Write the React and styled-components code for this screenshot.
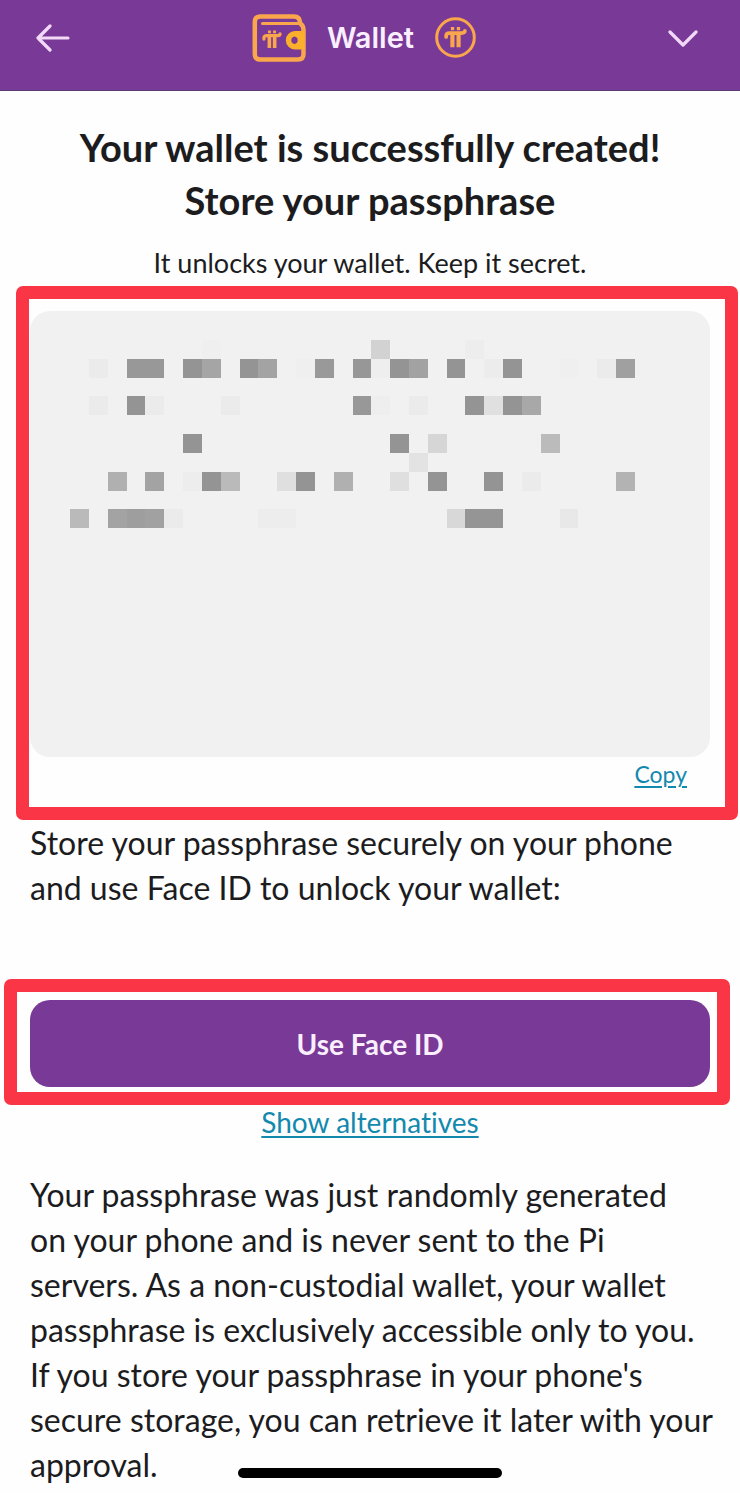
import React from 'react'
import styled, { createGlobalStyle } from 'styled-components'

const GlobalStyle = createGlobalStyle`
  * {
    box-sizing: border-box;
  }
  body {
    margin: 0;
    background: #fefefe;
    color: #1c1c1e;
    font-family: Lato, 'Open Sans', sans-serif;
    font-variant-ligatures: none;
  }
`

const Header = styled.header`
  display: flex;
  justify-content: space-between;
  align-items: center;
  height: 91px;
  padding: 0 42px 15px 36px;
  background: #783a96;
  border-bottom: 1px solid #5c3a70;
`

const IconButton = styled.button`
  display: flex;
  padding: 0;
  border: none;
  background: none;
  color: #f3d9f8;
  cursor: pointer;
`

const Brand = styled.div`
  display: flex;
  align-items: center;
  padding-right: 10px;
  gap: 21px;
  color: #f9a64c;
`

const BrandName = styled.span`
  font-family: Inter, sans-serif;
  font-weight: 600;
  font-size: 29px;
  line-height: 36px;
  color: #fbeeff;
`

const Intro = styled.section`
  padding: 30px 30px 1px;
  text-align: center;
`

const Title = styled.h1`
  margin: 0 0 13px;
  font-weight: 700;
  font-size: 38px;
  line-height: 53px;
`

const Subtitle = styled.p`
  margin: 0;
  font-size: 27px;
  line-height: 45px;
`

const Highlight = styled.div`
  margin: ${props => props.$margin};
  padding: ${props => props.$padding};
  border: 13px solid #fa3545;
  border-radius: 7px;
`

const PhraseBox = styled.div`
  min-height: 446px;
  padding: 29px 75px 29px 40px;
  border-radius: 20px;
  background: #f1f1f1;
  svg {
    display: block;
    width: 100%;
    height: auto;
  }
`

const CopyRow = styled.div`
  display: flex;
  justify-content: flex-end;
  padding: 0 23px 16px 0;
`

const TextLink = styled.a`
  font-size: ${props => props.$size};
  line-height: 34px;
  color: #1489ae;
  text-decoration: underline;
  text-decoration-thickness: 2px;
  text-underline-offset: 3px;
`

const Text = styled.p`
  margin: 0;
  padding: 0 26px 0 30px;
  font-size: 32px;
  line-height: 45px;
`

const PrimaryButton = styled.button`
  display: block;
  width: 100%;
  height: 87px;
  border: none;
  border-radius: 20px;
  background: #783a96;
  color: #fbeeff;
  font-family: inherit;
  font-weight: 700;
  font-size: 28px;
  cursor: pointer;
`

const Alternatives = styled.div`
  margin-bottom: 33px;
  text-align: center;
`

const HomeIndicator = styled.div`
  position: fixed;
  bottom: 15px;
  left: 50%;
  width: 264px;
  height: 10px;
  margin-left: -132px;
  border-radius: 5px;
  background: #000;
`

// [column, row, shade] on a 30 x 10 grid
const MOSAIC = [
  [7, 0, '#efefef'], [16, 0, '#d2d2d2'], [21, 0, '#ededed'],
  [1, 1, '#ebebeb'], [3, 1, '#989898'], [4, 1, '#989898'], [6, 1, '#949494'],
  [7, 1, '#a5a5a5'], [9, 1, '#949494'], [10, 1, '#a3a3a3'], [12, 1, '#efefef'],
  [13, 1, '#999999'], [15, 1, '#979797'], [16, 1, '#eeeeee'], [17, 1, '#949494'],
  [18, 1, '#a2a2a2'], [20, 1, '#949494'], [22, 1, '#ececec'], [23, 1, '#949494'],
  [26, 1, '#efefef'], [28, 1, '#ebebeb'], [29, 1, '#a0a0a0'],
  [1, 3, '#ebebeb'], [3, 3, '#949494'], [4, 3, '#ebebeb'], [8, 3, '#ebebeb'],
  [15, 3, '#989898'], [16, 3, '#eeeeee'], [18, 3, '#ebebeb'], [21, 3, '#949494'],
  [22, 3, '#e0e0e0'], [23, 3, '#949494'], [24, 3, '#a8a8a8'],
  [6, 5, '#949494'], [17, 5, '#949494'], [19, 5, '#d6d6d6'], [25, 5, '#bbbbbb'],
  [18, 6, '#e3e3e3'],
  [2, 7, '#b0b0b0'], [4, 7, '#a3a3a3'], [6, 7, '#ededed'], [7, 7, '#949494'],
  [8, 7, '#bababa'], [11, 7, '#dfdfdf'], [12, 7, '#949494'], [14, 7, '#b0b0b0'],
  [17, 7, '#dfdfdf'], [19, 7, '#949494'], [22, 7, '#949494'], [24, 7, '#ebebeb'],
  [29, 7, '#b3b3b3'],
  [0, 9, '#bababa'], [2, 9, '#a3a3a3'], [3, 9, '#9e9e9e'], [4, 9, '#a1a1a1'],
  [5, 9, '#ebebeb'], [10, 9, '#ededed'], [11, 9, '#ededed'], [20, 9, '#d8d8d8'],
  [21, 9, '#959595'], [22, 9, '#959595'], [26, 9, '#e8e8e8'],
]

const Mosaic = () => (
  <svg viewBox="0 0 30 10" shapeRendering="crispEdges" aria-label="Hidden passphrase">
    {MOSAIC.map(([x, y, fill]) => (
      <rect key={`${x}-${y}`} x={x} y={y} width="1" height="1" fill={fill} />
    ))}
  </svg>
)

const PiMark = ({ transform }) => (
  <g transform={transform} fill="none" stroke="currentColor" strokeWidth="3.4">
    <path d="M1.5 9V8Q1.5 5.5 4.5 5.5H15.5Q18.5 5.5 18.5 3.5" strokeLinecap="round" />
    <path d="M7.2 6V18.5M12.8 6V18.5" strokeWidth="3.8" />
    <path d="M5.8 1.5H8.8M11.2 1.5H14.2" strokeWidth="2.8" />
  </g>
)

const WalletIcon = () => (
  <svg width="54" height="48" viewBox="0 0 54 48" fill="none">
    <path
      d="M51.5 40V16Q51.5 11.5 48.2 9.5Q48 2.5 42 2.5H8.5Q2.8 2.5 2.8 8V40Q2.8 45.5 8.5 45.5H46Q51.5 45.5 51.5 40Z"
      stroke="currentColor"
      strokeWidth="4.5"
      strokeLinejoin="round"
    />
    <path d="M10.5 9.6H47" stroke="currentColor" strokeWidth="3" strokeLinecap="round" />
    <path
      fillRule="evenodd"
      fill="#fbb02c"
      d="M52 17H43A9.2 9.2 0 0 0 43 35.4H52ZM42.5 22.5A3.8 3.8 0 0 1 42.5 30A3.8 3.8 0 0 1 42.5 22.5Z"
    />
    <PiMark transform="translate(10.5 16.5) scale(0.95)" />
  </svg>
)

const CoinIcon = () => (
  <svg width="41" height="41" viewBox="0 0 41 41" fill="none">
    <circle cx="20.5" cy="20.5" r="18.8" stroke="currentColor" strokeWidth="3" />
    <PiMark transform="translate(9.5 10) scale(1.1)" />
  </svg>
)

const Line = ({ width, height, d }) => (
  <svg width={width} height={height} viewBox={`0 0 ${width} ${height}`} fill="none">
    <path d={d} stroke="currentColor" strokeWidth="3.2" strokeLinecap="round" strokeLinejoin="round" />
  </svg>
)

const App = () => {
  return (
    <>
      <GlobalStyle />
      <Header>
        <IconButton aria-label="Back">
          <Line width={34} height={28} d="M32 14H2M14 2L2 14L14 26" />
        </IconButton>
        <Brand>
          <WalletIcon />
          <BrandName>Wallet</BrandName>
          <CoinIcon />
        </Brand>
        <IconButton aria-label="Menu">
          <Line width={30} height={18} d="M2 3L15 16L28 3" />
        </IconButton>
      </Header>
      <main>
        <Intro>
          <Title>
            Your wallet is successfully created!
            <br />
            Store your passphrase
          </Title>
          <Subtitle>It unlocks your wallet. Keep it secret.</Subtitle>
        </Intro>
        <Highlight $margin="0 2px 0 16px" $padding="12px 15px 0 1px">
          <PhraseBox>
            <Mosaic />
          </PhraseBox>
          <CopyRow>
            <TextLink href="#copy" $size="23px">Copy</TextLink>
          </CopyRow>
        </Highlight>
        <Text>
          Store your passphrase securely on your phone and use Face ID to unlock your wallet:
        </Text>
        <Highlight $margin="69px 10px 0 4px" $padding="8px 7px 5px 13px">
          <PrimaryButton>Use Face ID</PrimaryButton>
        </Highlight>
        <Alternatives>
          <TextLink href="#alternatives" $size="28px">Show alternatives</TextLink>
        </Alternatives>
        <Text>
          Your passphrase was just randomly generated
          <br />
          on your phone and is never sent to the Pi servers. As a non-custodial wallet, your wallet
          passphrase is exclusively accessible only to you. If you store your passphrase in your
          phone's secure storage, you can retrieve it later with your approval.
        </Text>
      </main>
      <HomeIndicator />
    </>
  )
}

export default App
